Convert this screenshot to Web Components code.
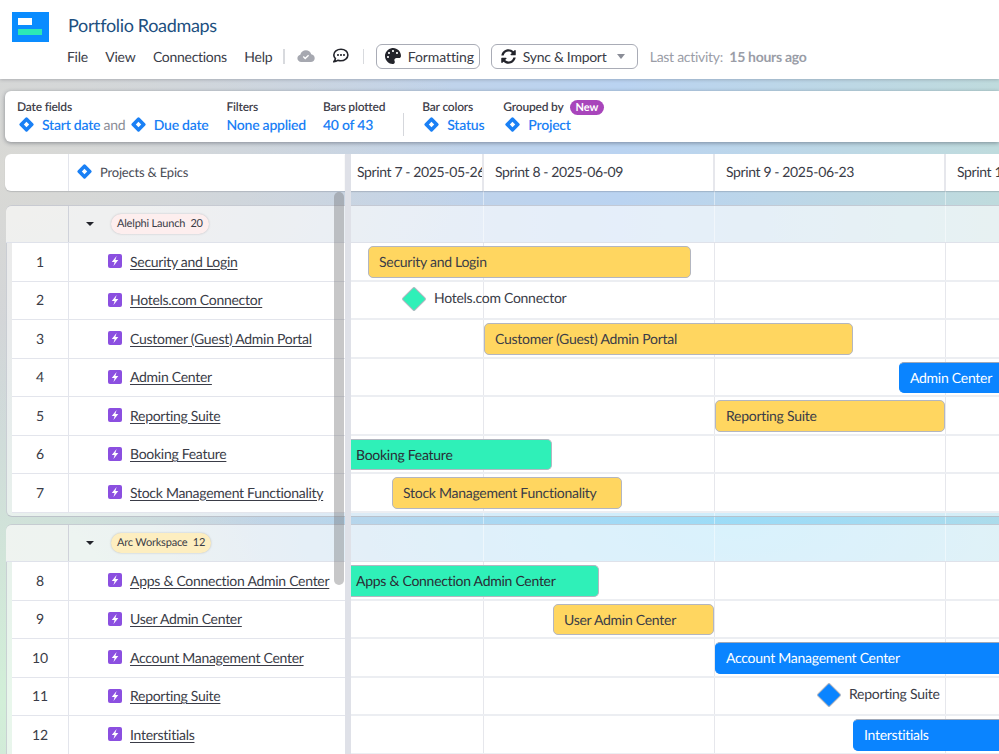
<!DOCTYPE html>
<html>
<head>
<meta charset="utf-8">
<title>Portfolio Roadmaps</title>
<style>
  html, body { margin: 0; height: 754px; overflow: hidden; }
  body {
    font-family: Lato, "Liberation Sans", sans-serif;
    text-rendering: geometricPrecision;
    color: #3a3c47;
    background:
      radial-gradient(300px 380px at 0 700px, #d2efd8 0%, rgba(210,239,216,0) 100%),
      radial-gradient(560px 190px at 740px 530px, #9bdcf7 0%, rgba(155,220,247,0) 100%),
      radial-gradient(480px 260px at 0 170px, #d9d9d5 0%, rgba(217,217,213,0) 100%),
      linear-gradient(90deg, #cfd3da 0%, #bad3f1 62%, #bfdbdd 100%);
  }
</style>
</head>
<body>
<app-header></app-header>
<filter-bar></filter-bar>
<roadmap-board>
  <roadmap-group label="Alelphi Launch" count="20" tint="#fdeeee">
    <roadmap-row num="1" name="Security and Login"><gantt-bar x="17" w="323" color="yellow">Security and Login</gantt-bar></roadmap-row>
    <roadmap-row num="2" name="Hotels.com Connector"><gantt-milestone x="63" color="#2ff0b8">Hotels.com Connector</gantt-milestone></roadmap-row>
    <roadmap-row num="3" name="Customer (Guest) Admin Portal"><gantt-bar x="133" w="369" color="yellow">Customer (Guest) Admin Portal</gantt-bar></roadmap-row>
    <roadmap-row num="4" name="Admin Center"><gantt-bar x="548" w="120" color="blue" open>Admin Center</gantt-bar></roadmap-row>
    <roadmap-row num="5" name="Reporting Suite"><gantt-bar x="364" w="230" color="yellow">Reporting Suite</gantt-bar></roadmap-row>
    <roadmap-row num="6" name="Booking Feature"><gantt-bar x="0" w="201" color="green" clipped>Booking Feature</gantt-bar></roadmap-row>
    <roadmap-row num="7" name="Stock Management Functionality"><gantt-bar x="41" w="230" color="yellow">Stock Management Functionality</gantt-bar></roadmap-row>
  </roadmap-group>
  <roadmap-group label="Arc Workspace" count="12" tint="#fdeec0">
    <roadmap-row num="8" name="Apps &amp; Connection Admin Center"><gantt-bar x="0" w="248" color="green" clipped>Apps &amp; Connection Admin Center</gantt-bar></roadmap-row>
    <roadmap-row num="9" name="User Admin Center"><gantt-bar x="202" w="161" color="yellow">User Admin Center</gantt-bar></roadmap-row>
    <roadmap-row num="10" name="Account Management Center"><gantt-bar x="364" w="320" color="blue" open>Account Management Center</gantt-bar></roadmap-row>
    <roadmap-row num="11" name="Reporting Suite"><gantt-milestone x="478" color="#0a84ff">Reporting Suite</gantt-milestone></roadmap-row>
    <roadmap-row num="12" name="Interstitials"><gantt-bar x="502" w="200" color="blue" open>Interstitials</gantt-bar></roadmap-row>
  </roadmap-group>
</roadmap-board>

<script>
const FONT = 'Lato, "Liberation Sans", sans-serif';
const DIAMOND = `<svg width="17" height="17" viewBox="0 0 17 17"><rect x="3" y="3" width="11" height="11" rx="1.5" transform="rotate(45 8.5 8.5)" fill="#1a80f5"/><rect x="6.6" y="6.6" width="3.8" height="3.8" transform="rotate(45 8.5 8.5)" fill="#fff"/></svg>`;

class AppHeader extends HTMLElement {
  constructor() {
    super();
    this.attachShadow({ mode: 'open' });
    this.shadowRoot.innerHTML = `
      <style>
        :host { display: flex; height: 79px; background: #fff; box-sizing: border-box; padding: 12px 0 0 12px; font-family: ${FONT}; box-shadow: 0 1px 3px rgba(60,60,70,.25); position: relative; }
        .logo { width: 37px; height: 30px; background: #0a8cff; position: relative; flex: none; }
        .logo i { position: absolute; display: block; }
        .logo .a { left: 6px; top: 6px; width: 14px; height: 7px; background: #fff; }
        .logo .b { left: 6px; top: 17px; width: 24px; height: 6px; background: #2ce8b5; }
        .main { margin-left: 19px; }
        h1 { margin: 0; font-size: 18px; line-height: 26px; font-weight: 400; color: #1d4f80; white-space: nowrap; letter-spacing: -.33px; }
        nav { display: flex; align-items: center; margin: 5px 0 0 -1px; height: 26px; font-size: 14px; color: #3a3c47; white-space: nowrap; letter-spacing: -.28px; }
        nav span.m { margin-right: 17.5px; }
        .sep { width: 1.5px; height: 15px; background: #d8dade; }
        .ic { display: flex; }
        button { font: inherit; letter-spacing: inherit; color: inherit; display: flex; align-items: center; height: 25px; background: #fff; border: 1px solid #a9acb6; border-radius: 6px; box-sizing: border-box; padding: 0 6px 0 8px; white-space: nowrap; }
        button svg { margin-right: 7px; flex: none; }
        .caret { width: 0; height: 0; border: 4px solid transparent; border-top: 5px solid #8a8d97; border-bottom: 0; margin-left: auto; margin-right: 6px; }
        .last { color: #9a9da7; margin-left: 12px; font-size: 14px; }
        .last b { font-weight: 700; margin-left: 3px; }
      </style>
      <div class="logo"><i class="a"></i><i class="b"></i></div>
      <div class="main">
        <h1>Portfolio Roadmaps</h1>
        <nav>
          <span class="m">File</span><span class="m">View</span><span class="m">Connections</span><span class="m" style="margin-right:11px">Help</span>
          <span class="sep"></span>
          <span class="ic" style="margin:0 18px 0 12px"><svg width="18" height="14" viewBox="0 0 18 14"><path d="M4.3 13C2 13 .4 11.3.4 9.3c0-1.8 1.2-3.2 2.9-3.6C4 3.1 6.200 1.300 8.900 1.300c2.500 0 4.600 1.600 5.300 3.900 2 .3 3.500 2 3.500 4 0 2.100-1.700 3.800-3.900 3.800z" fill="#a6a8b0"/><path d="M6.300 7.600l1.900 1.900 3.400-3.300" fill="none" stroke="#fff" stroke-width="1.400"/></svg></span>
          <span class="ic" style="margin-right:14px"><svg width="16" height="16" viewBox="0 0 16 16"><path d="M8 1.300C4 1.300.8 3.800.8 7c0 1.400.6 2.600 1.600 3.600-.2 1.200-1 2.400-1.500 3 1.400 0 2.900-.6 3.900-1.300.9.300 1.900.5 2.800.5 4 0 7.300-2.600 7.300-5.800S12 1.300 8 1.300z" fill="none" stroke="#23242b" stroke-width="1.600"/><circle cx="5" cy="7" r="1.050" fill="#23242b"/><circle cx="8" cy="7" r="1.050" fill="#23242b"/><circle cx="11" cy="7" r="1.050" fill="#23242b"/></svg></span>
          <span class="sep"></span>
          <button style="margin-left:11.5px;width:104px;letter-spacing:-.1px"><svg width="16" height="16" viewBox="0 0 512 512"><path fill="#23242b" d="M204.300 5C104.900 24.400 24.800 104.300 5.200 203.400c-37 187 131.700 326.400 258.800 306.700 41.200-6.400 61.400-54.600 42.500-91.700-23.100-45.400 9.900-98.400 60.900-98.400h79.700c35.800 0 64.800-29.600 64.900-65.300C511.500 97.100 368.100-26.900 204.300 5zM96 320c-17.700 0-32-14.300-32-32s14.300-32 32-32 32 14.300 32 32-14.300 32-32 32zm32-128c-17.700 0-32-14.300-32-32s14.300-32 32-32 32 14.300 32 32-14.300 32-32 32zm128-64c-17.700 0-32-14.300-32-32s14.300-32 32-32 32 14.300 32 32-14.300 32-32 32zm128 64c-17.700 0-32-14.300-32-32s14.300-32 32-32 32 14.300 32 32-14.300 32-32 32z"/></svg>Formatting</button>
          <button style="margin-left:11px;width:147px;padding-left:9px"><svg width="15" height="15" viewBox="0 0 512 512"><path fill="#23242b" d="M370.720 133.280C339.458 104.008 298.888 87.962 255.848 88c-77.458.068-144.328 53.178-162.791 126.850-1.344 5.363-6.122 9.150-11.651 9.150H24.103c-7.498 0-13.194-6.807-11.807-14.176C33.933 94.924 134.813 8 256 8c66.448 0 126.791 26.136 171.315 68.685L463.030 40.970C478.149 25.851 504 36.559 504 57.941V192c0 13.255-10.745 24-24 24H345.941c-21.382 0-32.090-25.851-16.971-40.971l41.750-41.749zM32 296h134.059c21.382 0 32.090 25.851 16.971 40.971l-41.750 41.750c31.262 29.273 71.835 45.319 114.876 45.280 77.418-.07 144.315-53.144 162.787-126.849 1.344-5.363 6.122-9.150 11.651-9.150h57.304c7.498 0 13.194 6.807 11.807 14.176C478.067 417.076 377.187 504 256 504c-66.448 0-126.791-26.136-171.315-68.685L48.970 471.030C33.851 486.149 8 475.441 8 454.059V320c0-13.255 10.745-24 24-24z"/></svg>Sync &amp; Import<span class="caret"></span></button>
          <span class="last">Last activity: <b>15 hours ago</b></span>
        </nav>
      </div>`;
  }
}
customElements.define('app-header', AppHeader);

class FilterBar extends HTMLElement {
  constructor() {
    super();
    this.attachShadow({ mode: 'open' });
    const field = (text) => `<span class="v">${DIAMOND}<a>${text}</a></span>`;
    this.shadowRoot.innerHTML = `
      <style>
        :host { display: flex; align-items: flex-start; gap: 18px; height: 51px; margin: 12px 0 0 5px; box-sizing: border-box; padding: 8px 12px; background: #fff; border-radius: 6px 0 0 6px; box-shadow: 0 1px 4px rgba(40,45,60,.45); font-family: ${FONT}; }
        .g { display: flex; flex-direction: column; }
        .t { font-size: 12px; line-height: 16px; color: #3f414b; height: 16px; display: flex; align-items: center; font-weight: 600; white-space: nowrap; letter-spacing: -.2px; }
        .row { display: flex; align-items: center; height: 22px; margin-top: -2px; font-size: 14px; color: #8b8d96; white-space: pre; letter-spacing: -.24px; }
        .v { display: inline-flex; align-items: center; }
        .v svg { margin-right: 7px; margin-left: 1px; }
        a { color: #1a80f5; font-weight: 600; }
        .new { background: #a845bb; color: #fff; font-size: 11px; font-weight: 700; line-height: 15px; border-radius: 8px; padding: 0 6px; margin-left: 6px; letter-spacing: 0; }
        .div { width: 1px; height: 23px; background: #d5d7dc; margin-top: 14px; }
      </style>
      <div class="g"><div class="t">Date fields</div><div class="row">${field('Start date')} and ${field('Due date')}</div></div>
      <div class="g"><div class="t">Filters</div><div class="row"><a>None applied</a></div></div>
      <div class="g" style="margin-left:-1px"><div class="t">Bars plotted</div><div class="row"><a>40 of 43</a></div></div>
      <div class="div"></div>
      <div class="g"><div class="t">Bar colors</div><div class="row">${field('Status')}</div></div>
      <div class="g" style="margin-left:1px"><div class="t">Grouped by<span class="new">New</span></div><div class="row">${field('Project')}</div></div>`;
  }
}
customElements.define('filter-bar', FilterBar);

class RoadmapBoard extends HTMLElement {
  constructor() {
    super();
    this.attachShadow({ mode: 'open' });
    this.shadowRoot.innerHTML = `
      <style>
        :host { display: block; position: relative; margin-top: 12px; font-family: ${FONT};
          background:
            linear-gradient(rgba(255,255,255,.45), rgba(255,255,255,.45)) 483px 0 / 1px 100% no-repeat,
            linear-gradient(rgba(255,255,255,.45), rgba(255,255,255,.45)) 714px 0 / 1px 100% no-repeat,
            linear-gradient(rgba(255,255,255,.45), rgba(255,255,255,.45)) 945px 0 / 1px 100% no-repeat; }
        .head { display: flex; height: 37px; margin-left: 5px; font-size: 13.5px; }
        .left { display: flex; width: 340px; background: #fff; border-radius: 6px 0 0 6px; box-shadow: 0 1px 1px rgba(60,65,80,.2); }
        .n { width: 64px; box-sizing: border-box; border-right: 1px solid #e3e5ec; }
        .title { display: flex; align-items: center; padding: 0 0 2px 7px; color: #4a4c56; font-size: 13px; letter-spacing: -.2px; }
        .title svg { margin-right: 7px; }
        .sprints { display: flex; flex: 1; background: #fff; font-size: 14px; color: #3a3c47; box-shadow: 0 1px 1px rgba(60,65,80,.2); overflow: hidden; letter-spacing: -.38px; }
        .s { flex: none; box-sizing: border-box; line-height: 36px; padding-left: 11px; white-space: nowrap; overflow: hidden; border-right: 2px solid #e6e7ec; }
        .track { position: absolute; left: 345px; width: 6px; top: 0; bottom: -40px; background: #dfe1e8; }
        .thumb { position: absolute; left: 334px; top: 38px; width: 10px; height: 393px; background: rgba(122,122,124,.42); border-radius: 5px; z-index: 3; }
        .groups { display: flex; flex-direction: column; gap: 7.5px; margin-top: 14px; }
      </style>
      <div class="head">
        <div class="left"><div class="n"></div><div class="title">${DIAMOND}Projects &amp; Epics</div></div>
        <div class="sprints">
          <div class="s" style="width:139px;padding-left:12px">Sprint 7 - 2025-05-26</div>
          <div class="s" style="width:231px">Sprint 8 - 2025-06-09</div>
          <div class="s" style="width:231px">Sprint 9 - 2025-06-23</div>
          <div class="s" style="width:231px">Sprint 10 - 2025-07-07</div>
        </div>
      </div>
      <div class="track"></div>
      <div class="thumb"></div>
      <div class="groups"><slot></slot></div>`;
  }
}
customElements.define('roadmap-board', RoadmapBoard);

class RoadmapGroup extends HTMLElement {
  constructor() {
    super();
    this.attachShadow({ mode: 'open' });
    this.shadowRoot.innerHTML = `
      <style>
        :host { display: block; margin-left: 6px; font-family: ${FONT}; }
        .hd { display: flex; height: 38px; box-sizing: border-box; border-top: 1px solid rgba(150,155,170,.45); border-bottom: 1px solid #dfe2ea; border-radius: 6px 0 0 0; background: rgba(255,255,255,.62); }
        .n { width: 63px; box-sizing: border-box; border-right: 1px solid #cfd2da; background: rgba(240,240,238,.35); border-radius: 6px 0 0 0; }
        .c { width: 276px; display: flex; align-items: center; padding: 0 0 1px 17px; box-sizing: border-box; }
        .tri { width: 0; height: 0; border: 4px solid transparent; border-top: 4px solid #23242b; border-bottom: 0; }
        .pill { margin-left: 17px; font-size: 11px; line-height: 20px; padding: 0 6px; border-radius: 10px; color: #3a3c47; box-shadow: 0 0 2px rgba(90,90,100,.35); white-space: pre; letter-spacing: -.2px; }
        .body { padding: 0 0 3px 5px; border-left: 1px solid rgba(180,185,195,.6); border-bottom: 1px solid rgba(170,175,185,.7); border-radius: 0 0 0 6px; background: rgba(255,255,255,.5); }
      </style>
      <div class="hd"><div class="n"></div><div class="c"><span class="tri"></span><span class="pill"></span></div></div>
      <div class="body"><slot></slot></div>`;
    const pill = this.shadowRoot.querySelector('.pill');
    pill.textContent = `${this.getAttribute('label')}  ${this.getAttribute('count')}`;
    pill.style.background = this.getAttribute('tint');
  }
}
customElements.define('roadmap-group', RoadmapGroup);

class RoadmapRow extends HTMLElement {
  constructor() {
    super();
    this.attachShadow({ mode: 'open' });
    this.shadowRoot.innerHTML = `
      <style>
        :host { display: flex; height: 38.5px; box-sizing: border-box; font-family: ${FONT}; font-size: 14px; color: #3a3c47; }
        .n { width: 57px; background: #fff; border-right: 1px solid #e3e5ec; border-bottom: 1px solid #e3e5ec; box-sizing: border-box; display: flex; align-items: center; justify-content: center; padding-bottom: 1.5px; }
        .name { width: 276px; background: #fff; border-bottom: 1px solid #e3e5ec; box-sizing: border-box; display: flex; align-items: center; padding: 0 0 1.5px 39px; white-space: nowrap; letter-spacing: -.28px; }
        .name svg { margin-right: 8px; flex: none; }
        .name u { text-underline-offset: 2px; }
        .gap { width: 6px; flex: none; }
        .line { flex: 1; position: relative; overflow: hidden; box-sizing: border-box; border-bottom: 2px solid #eceef2;
          background:
            linear-gradient(#e6e7ec, #e6e7ec) 132px 0 / 1px 100% no-repeat,
            linear-gradient(#e6e7ec, #e6e7ec) 363px 0 / 1px 100% no-repeat,
            linear-gradient(#e6e7ec, #e6e7ec) 594px 0 / 1px 100% no-repeat,
            #fff; }
      </style>
      <div class="n"></div>
      <div class="name">
        <svg width="14" height="14" viewBox="0 0 14 14"><rect width="14" height="14" rx="2" fill="#8b4fe0"/><path d="M8.600 2 3.800 7.900h2.800L5.500 12l4.800-6H7.400z" fill="#fff"/></svg>
        <u></u>
      </div>
      <div class="gap"></div>
      <div class="line"><slot></slot></div>`;
    this.shadowRoot.querySelector('.n').textContent = this.getAttribute('num');
    this.shadowRoot.querySelector('u').textContent = this.getAttribute('name');
  }
}
customElements.define('roadmap-row', RoadmapRow);

const BAR_COLORS = {
  yellow: { bg: '#ffd660', fg: '#3a3c47' },
  green: { bg: '#2ff0b8', fg: '#2a2c35' },
  blue: { bg: '#0a84ff', fg: '#fff' },
};

class GanttBar extends HTMLElement {
  constructor() {
    super();
    this.attachShadow({ mode: 'open' });
    this.shadowRoot.innerHTML = `
      <style>
        :host { position: absolute; top: 3px; height: 31.5px; box-sizing: border-box; display: flex; align-items: center; padding-left: 10px; border: 1px solid #b3b6c0; border-radius: 5px; font-size: 14px; white-space: nowrap; overflow: hidden; letter-spacing: -.27px; }
        :host([clipped]) { border-radius: 0 5px 5px 0; border-left: 0; padding-left: 5px; }
        :host([open]) { border-color: #0a84ff; border-top-color: #9fa8b8; }
      </style>
      <slot></slot>`;
    const c = BAR_COLORS[this.getAttribute('color')];
    this.style.left = this.getAttribute('x') + 'px';
    this.style.width = this.getAttribute('w') + 'px';
    this.style.background = c.bg;
    this.style.color = c.fg;
  }
}
customElements.define('gantt-bar', GanttBar);

class GanttMilestone extends HTMLElement {
  constructor() {
    super();
    this.attachShadow({ mode: 'open' });
    this.shadowRoot.innerHTML = `
      <style>
        :host { position: absolute; top: 0; height: 35px; display: flex; align-items: center; font-size: 14px; color: #3a3c47; white-space: nowrap; letter-spacing: -.27px; }
        i { display: block; width: 18px; height: 18px; transform: rotate(45deg); border: 1px solid #b3b6c0; box-sizing: border-box; border-radius: 2px; margin: 0 11px 0 0; }
        span { padding-bottom: 3px; }
      </style>
      <i></i><span><slot></slot></span>`;
    this.style.left = (this.getAttribute('x') - 9) + 'px';
    this.shadowRoot.querySelector('i').style.background = this.getAttribute('color');
  }
}
customElements.define('gantt-milestone', GanttMilestone);
</script>
</body>
</html>
